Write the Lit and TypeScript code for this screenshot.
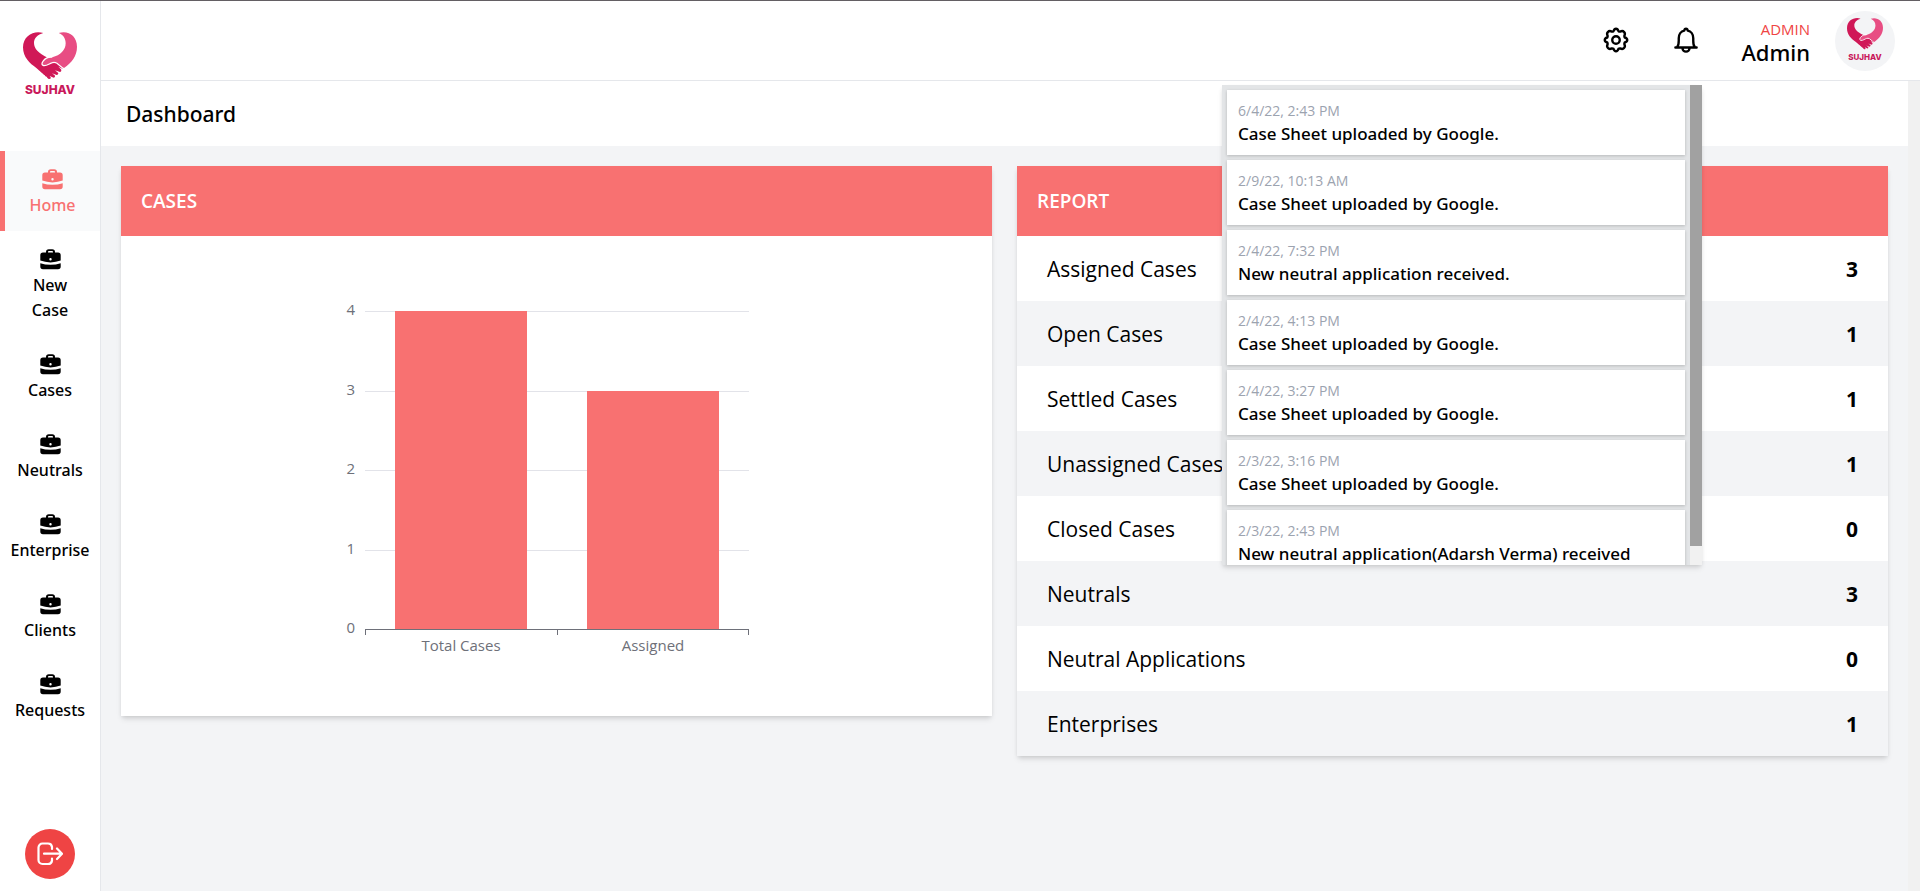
import { LitElement, html, css, svg } from "lit";
import { customElement, property } from "lit/decorators.js";
import { classMap } from "lit/directives/class-map.js";

const NAV = ["Home", "New Case", "Cases", "Neutrals", "Enterprise", "Clients", "Requests"];

const REPORT: [string, number][] = [
  ["Assigned Cases", 3],
  ["Open Cases", 1],
  ["Settled Cases", 1],
  ["Unassigned Cases", 1],
  ["Closed Cases", 0],
  ["Neutrals", 3],
  ["Neutral Applications", 0],
  ["Enterprises", 1],
];

const NOTICES: [string, string][] = [
  ["6/4/22, 2:43 PM", "Case Sheet uploaded by Google."],
  ["2/9/22, 10:13 AM", "Case Sheet uploaded by Google."],
  ["2/4/22, 7:32 PM", "New neutral application received."],
  ["2/4/22, 4:13 PM", "Case Sheet uploaded by Google."],
  ["2/4/22, 3:27 PM", "Case Sheet uploaded by Google."],
  ["2/3/22, 3:16 PM", "Case Sheet uploaded by Google."],
  ["2/3/22, 2:43 PM", "New neutral application(Adarsh Verma) received"],
];

const CHART: [string, number][] = [
  ["Total Cases", 4],
  ["Assigned", 3],
];

@customElement("brand-logo")
export class BrandLogo extends LitElement {
  static styles = css`
    :host { display: block; }
    svg { display: block; width: 100%; }
    .word { font: 800 36px "Inter", sans-serif; fill: #c9195b; }
  `;
  render() {
    return html`<svg viewBox="0 0 162 198" role="img" aria-label="Sujhav">
      <path fill="#d01857" d="M61 3C34-6 0 10 0 46C0 76 20 94 40 108L76 140Q80 143 84 138L80 132L92 137Q98 136 95 130L87 124L101 129Q108 128 105 122L96 115L111 120Q117 118 114 112L106 104L118 110Q124 108 120 102L98 82L74 77C46 64 33 50 33 33C33 18 44 8 61 3Z"/>
      <path fill="#e84d83" d="M107 3C135-6 162 11 162 44C162 72 146 92 123 108L101 91Q94 88 86 91C78 94 72 100 62 100Q55 98 61 90C68 80 76 76 88 76C112 70 128 54 128 34C128 19 121 9 107 3Z"/>
      <path fill="none" stroke="#fff" stroke-width="4" stroke-linecap="round" d="M86 75Q70 74 60 88Q53 98 62 101C72 102 80 94 88 92Q95 90 101 93L122 110"/>
      <path fill="none" stroke="#fff" stroke-width="4" stroke-dasharray="4 5" d="M40 113L74 140"/>
      <text class="word" x="81" y="187" text-anchor="middle">SUJHAV</text>
    </svg>`;
  }
}

@customElement("bar-chart")
export class BarChart extends LitElement {
  @property({ attribute: false }) data: [string, number][] = [];
  @property({ type: Number }) max = 4;
  static styles = css`
    :host { display: block; }
    svg { display: block; width: 481px; max-width: 100%; margin: 0 auto; }
    text { font: 15px "Open Sans", sans-serif; fill: #6e7079; }
    .grid { stroke: #e2e3e9; }
    .axis { stroke: #6e7079; fill: none; }
    .bar { fill: #f87171; }
  `;
  render() {
    const left = 49, base = 393, width = 384, height = 318;
    const slot = width / this.data.length;
    const bar = 132;
    const yOf = (v: number) => Math.round(base - (v / this.max) * height);
    const levels = Array.from({ length: this.max + 1 }, (_, i) => i);
    return html`<svg viewBox="0 0 481 480" role="img" aria-label="Cases">
      ${levels.map((v) => svg`
        ${v ? svg`<path class="grid" d="M${left} ${yOf(v) + 0.5}h${width}"/>` : ""}
        <text x="39" y="${yOf(v) + 4}" text-anchor="end">${v}</text>`)}
      ${this.data.map(([name, v], i) => svg`
        <rect class="bar" x="${left + slot * i + (slot - bar) / 2}" y="${yOf(v)}" width="${bar}" height="${base - yOf(v)}"/>
        <text x="${left + slot * (i + 0.5)}" y="415" text-anchor="middle">${name}</text>`)}
      <path class="axis" d="M${left} ${base + 0.5}h${width}M${left + 0.5} ${base}v6M${left + slot + 0.5} ${base}v6M${left + width - 0.5} ${base}v6"/>
    </svg>`;
  }
}

@customElement("app-root")
export class AppRoot extends LitElement {
  static styles = css`
    :host {
      display: grid;
      grid-template-columns: 101px minmax(0, 1fr);
      height: 100vh;
      box-sizing: border-box;
      border-top: 1px solid #635f63;
      background: #fff;
      color: #000;
      font: 16px/25px "Open Sans", "Noto Sans", sans-serif;
    }
    * { box-sizing: border-box; }
    h1, h2, p, ul { margin: 0; padding: 0; }
    ul { list-style: none; }
    button { border: 0; padding: 0; background: none; color: inherit; display: grid; place-items: center; cursor: pointer; }
    svg { display: block; }

    .side { display: flex; flex-direction: column; align-items: center; border-right: 1px solid #e5e7eb; padding: 31px 0 12px; }
    .brand { width: 54px; margin-bottom: 53px; }
    .nav { width: 100%; flex: 1; }
    .link { display: flex; flex-direction: column; align-items: center; gap: 1px; padding: 16px 8px 13px; color: inherit; text-decoration: none; font-family: "Noto Sans", sans-serif; font-weight: 500; text-align: center; }
    .link svg { width: 25px; height: 25px; }
    .link span { width: min-content; }
    .link.on { color: #f87171; background: #f9fafb; border-left: 5px solid #f87171; }
    .logout { width: 50px; height: 50px; border-radius: 50%; background: #ef4444; color: #fff; }

    .main { display: grid; grid-template-rows: 80px minmax(0, 1fr); position: relative; }
    .top { display: flex; align-items: center; justify-content: flex-end; padding-right: 25px; border-bottom: 1px solid #e5e7eb; }
    .tool { width: 30px; height: 30px; margin: 0 40px 2px 0; }
    .who { text-align: right; margin: 3px 25px 0 0; }
    .role { font-size: 15px; line-height: 20px; color: #ef4444; }
    .name { font-family: "Noto Sans", sans-serif; font-size: 22px; line-height: 27px; font-weight: 500; }
    .avatar { width: 60px; height: 60px; border-radius: 50%; background: #f3f4f6; display: flex; justify-content: center; padding-top: 7px; }
    .avatar brand-logo { width: 36px; }

    .body { display: grid; grid-template-columns: minmax(0, 1fr) 12px; }
    .track { background: #f1f1f1; }
    .page { background: #f3f4f6; }
    .title { background: #fff; padding: 21px 25px 19px; font-family: "Noto Sans", sans-serif; font-size: 21px; line-height: 25px; font-weight: 500; }
    .cards { display: grid; grid-template-columns: 1fr 1fr; gap: 25px; padding: 20px; align-items: start; }
    .card { background: #fff; box-shadow: 0 4px 6px -1px rgb(0 0 0 / 0.1), 0 2px 4px -1px rgb(0 0 0 / 0.1); }
    .head { background: #f87171; color: #fff; padding: 23px 20px 22px; font-size: 19px; line-height: 25px; font-weight: 600; }
    .report { width: 100%; border-collapse: collapse; font-size: 21px; line-height: 25px; }
    .report th { text-align: left; font-weight: 400; padding: 21px 30px 19px; }
    .report td { text-align: right; font-weight: 700; padding: 21px 30px 19px; }
    .report tr:nth-child(even) { background: #f3f4f6; }

    .popup { position: absolute; top: 84px; right: 218px; width: 480px; height: 480px; display: grid; grid-template-columns: minmax(0, 1fr) 12px; background: #e3e5e7; box-shadow: 0 4px 6px -1px rgb(0 0 0 / 0.1), 0 2px 4px -1px rgb(0 0 0 / 0.1); }
    .notices { display: flex; flex-direction: column; gap: 5px; padding: 5px; overflow: hidden; }
    .notice { flex: none; background: #fff; padding: 10px 11px; box-shadow: 0 1px 3px rgb(0 0 0 / 0.2); }
    .when { font-size: 14px; line-height: 22px; color: #9ca3af; }
    .what { font-family: "Noto Sans", sans-serif; font-size: 17px; line-height: 23px; font-weight: 500; }
    .thumb { height: 96%; background: #a1a1a1; }
  `;

  private briefcase() {
    return html`<svg viewBox="0 0 25 25" fill="currentColor" aria-hidden="true">
      <path fill-rule="evenodd" d="M8 5.500V5A2.800 2.800 0 0 1 10.800 2.200H14.200A2.800 2.800 0 0 1 17 5V5.500H20A2.700 2.700 0 0 1 22.700 8.200V13.600Q18 15.400 12.500 15.400T2.300 13.600V8.200A2.700 2.700 0 0 1 5 5.500ZM10 5.500H15V5A.9.9 0 0 0 14.100 4.100H10.900A.9.9 0 0 0 10 5ZM12.500 11A1.200 1.200 0 1 0 12.500 13.400A1.200 1.200 0 1 0 12.500 11Z"/>
      <path d="M2.300 16.200Q7 17.800 12.500 17.800T22.700 16.200V19.600A2.700 2.700 0 0 1 20 22.300H5A2.700 2.700 0 0 1 2.300 19.600Z"/>
    </svg>`;
  }

  render() {
    return html`
      <aside class="side">
        <brand-logo class="brand"></brand-logo>
        <nav class="nav">
          ${NAV.map((n, i) => html`<a href="#" class=${classMap({ link: true, on: i === 0 })}>${this.briefcase()}<span>${n}</span></a>`)}
        </nav>
        <button class="logout" aria-label="Log out">
          <svg width="26" height="26" viewBox="0 0 26 26" fill="none" stroke="currentColor" stroke-width="2.200" stroke-linecap="round" stroke-linejoin="round">
            <path d="M15 8V6A4 4 0 0 0 11 2.500H5.500A4 4 0 0 0 1.500 6.500V19A4 4 0 0 0 5.500 23H11A4 4 0 0 0 15 19.500V17.500M7 12.700H24.500M20 7.500L25 12.700L20 18"/>
          </svg>
        </button>
      </aside>
      <div class="main">
        <header class="top">
          <button class="tool" aria-label="Settings">
            <svg width="30" height="30" viewBox="0 0 24 24" fill="none" stroke="currentColor" stroke-width="1.900" stroke-linejoin="round"><circle cx="12" cy="12" r="3"/><path d="M12 3Q13.400 3 14 5Q14.600 5.400 15.300 5.300Q17.400 4.300 18.400 5.600Q19.700 6.600 18.700 8.700Q18.600 9.400 19 10Q21 10.600 21 12Q21 13.400 19 14Q18.600 14.600 18.700 15.300Q19.700 17.400 18.400 18.400Q17.400 19.700 15.300 18.700Q14.600 18.600 14 19Q13.400 21 12 21Q10.600 21 10 19Q9.400 18.600 8.700 18.700Q6.600 19.700 5.600 18.400Q4.300 17.400 5.300 15.300Q5.400 14.600 5 14Q3 13.400 3 12Q3 10.600 5 10Q5.400 9.400 5.300 8.700Q4.300 6.600 5.600 5.600Q6.600 4.300 8.700 5.300Q9.400 5.400 10 5Q10.600 3 12 3Z"/></svg>
          </button>
          <button class="tool" aria-label="Notifications">
            <svg width="30" height="30" viewBox="0 0 24 24" fill="none" stroke="currentColor" stroke-width="1.900" stroke-linecap="round" stroke-linejoin="round"><path d="M3.500 18H20.500M5 17.500C6 16.500 6.200 14.800 6.200 12.500V10.500C6.200 7.500 8 5 10.600 4.500Q10.800 3 12 3T13.400 4.500C16 5 17.800 7.500 17.800 10.500V12.500C17.800 14.800 18 16.500 19 17.500M9.200 18.500A2.800 2.800 0 0 0 14.800 18.500"/></svg>
          </button>
          <div class="who"><p class="role">ADMIN</p><p class="name">Admin</p></div>
          <div class="avatar"><brand-logo></brand-logo></div>
        </header>
        <div class="body">
          <main class="page">
            <h1 class="title">Dashboard</h1>
            <div class="cards">
              <section class="card">
                <h2 class="head">CASES</h2>
                <bar-chart .data=${CHART}></bar-chart>
              </section>
              <section class="card">
                <h2 class="head">REPORT</h2>
                <table class="report"><tbody>
                  ${REPORT.map(([k, v]) => html`<tr><th scope="row">${k}</th><td>${v}</td></tr>`)}
                </tbody></table>
              </section>
            </div>
          </main>
          <div class="track"></div>
        </div>
        <div class="popup">
          <ul class="notices">
            ${NOTICES.map(([t, m]) => html`<li class="notice"><p class="when">${t}</p><p class="what">${m}</p></li>`)}
          </ul>
          <div class="track"><div class="thumb"></div></div>
        </div>
      </div>
    `;
  }
}
